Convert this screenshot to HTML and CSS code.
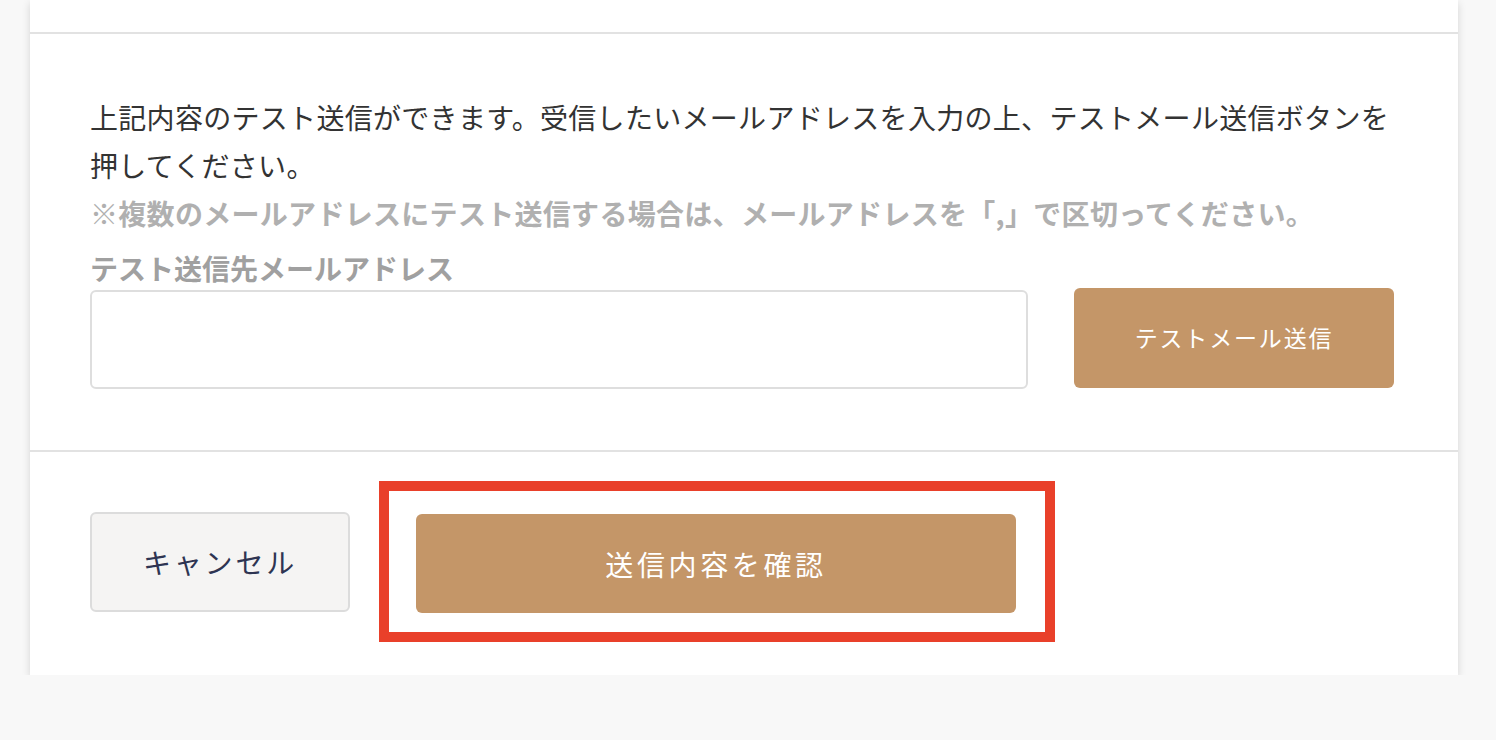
FILE: index.html
```html
<!DOCTYPE html>
<html lang="ja">
<head>
    <meta charset="UTF-8">
    <meta name="viewport" content="width=device-width, initial-scale=1.0">
    <title>テスト送信</title>
    <link rel="stylesheet" href="styles.css">
</head>
<body>
    <div class="card">
        <div class="card-top"></div>

        <!-- Test send -->
        <div class="test-section">
            <p class="lead">上記内容のテスト送信ができます。受信したいメールアドレスを入力の上、テストメール送信ボタンを押してください。</p>
            <p class="note">※複数のメールアドレスにテスト送信する場合は、メールアドレスを「,」で区切ってください。</p>
            <label for="testMail">テスト送信先メールアドレス</label>
            <div class="test-row">
                <input type="text" id="testMail">
                <button class="btn-test">テストメール送信</button>
            </div>
        </div>

        <!-- Actions -->
        <div class="actions">
            <button class="btn-cancel">キャンセル</button>
            <div class="confirm-wrap">
                <button class="btn-confirm">送信内容を確認</button>
            </div>
        </div>
    </div>
</body>
</html>
```

FILE: styles.css
```css
/* Global Styles */
body {
    font-family: "Noto Sans CJK JP", "Noto Sans", sans-serif;
    background-color: #f8f8f8;
    color: #333;
    margin: 0;
    padding: 0;
}

/* Card */
.card {
    margin: 0 38px 0 30px;
    background-color: #ffffff;
    box-shadow: 0 3px 8px rgba(0, 0, 0, 0.15);
}

.card-top {
    height: 32px;
    border-bottom: 2px solid #e2e2e2;
}

/* Test send section */
.test-section {
    padding: 59px 60px 61px;
    border-bottom: 2px solid #e2e2e2;
}

.lead {
    margin: 0;
    font-size: 28px;
    line-height: 48px;
    letter-spacing: 0.3px;
    color: #333;
}

.note {
    margin: 0;
    font-size: 28px;
    line-height: 48px;
    letter-spacing: 0.3px;
    font-weight: 700;
    color: #b0b0b0;
}

label {
    display: block;
    margin-top: 11px;
    font-size: 28px;
    line-height: 40px;
    font-weight: 700;
    color: #a0a0a0;
}

.test-row {
    display: flex;
    align-items: flex-start;
}

.test-row input {
    width: 938px;
    height: 99px;
    margin-top: 2px;
    border: 2px solid #dedede;
    border-radius: 6px;
    box-sizing: border-box;
    font-size: 24px;
    padding: 0 16px;
}

.btn-test {
    width: 320px;
    height: 100px;
    margin-left: 46px;
    padding-bottom: 4px;
    background-color: #c49668;
    color: #ffffff;
    border: none;
    border-radius: 6px;
    font-family: inherit;
    font-size: 23px;
    letter-spacing: 0.08em;
}

/* Bottom actions */
.actions {
    display: flex;
    align-items: flex-start;
    padding: 60px 60px 62px;
}

.btn-cancel {
    width: 260px;
    height: 100px;
    background-color: #f5f4f3;
    border: 2px solid #dcdcdc;
    border-radius: 6px;
    color: #2e3452;
    font-family: inherit;
    font-size: 28px;
    letter-spacing: 0.1em;
}

.confirm-wrap {
    position: relative;
    margin-left: 66px;
    margin-top: 2px;
}

/* Red highlight frame */
.confirm-wrap::after {
    content: "";
    position: absolute;
    top: -33px;
    left: -37px;
    right: -39px;
    bottom: -29px;
    border: 10px solid #e9402a;
}

.btn-confirm {
    display: block;
    width: 600px;
    height: 99px;
    background-color: #c49668;
    color: #ffffff;
    border: none;
    border-radius: 6px;
    font-family: inherit;
    font-size: 28px;
    letter-spacing: 0.13em;
}
```
